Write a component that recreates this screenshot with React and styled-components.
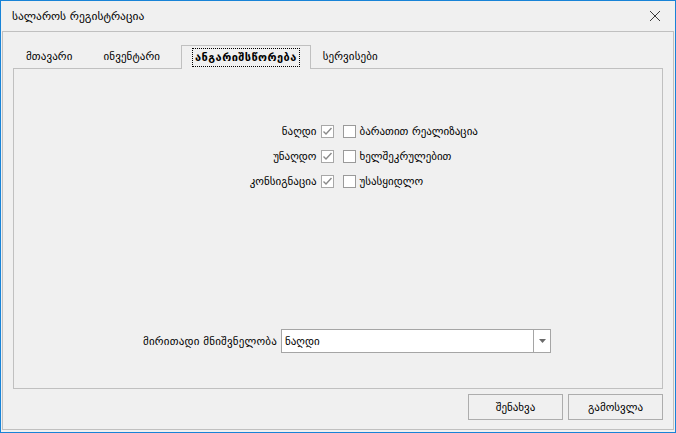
import React from 'react';
import styled, { createGlobalStyle } from 'styled-components';

const GlobalStyle = createGlobalStyle`
    html, body {
        margin: 0;
        padding: 0;
        background: #f0f0f0;
    }
    * {
        box-sizing: border-box;
    }
`;

const Window = styled.div`
    width: 676px;
    height: 433px;
    border: 1px solid #1883d7;
    background: #f0f0f0;
    display: flex;
    flex-direction: column;
    font-family: "DejaVu Sans", sans-serif;
    font-size: 11px;
    color: #000;
`;

const TitleBar = styled.div`
    height: 30px;
    display: flex;
    align-items: center;
    justify-content: space-between;
    padding: 0 14px 0 11px;
    font-size: 11.5px;
`;

const CloseButton = styled.div`
    width: 12px;
    height: 12px;
    display: flex;
    svg {
        display: block;
    }
`;

const Frame = styled.div`
    flex: 1;
    margin: 0 1px 2px 1px;
    border: 1px solid #c0c0c0;
    padding: 12px 10px 0 10px;
    display: flex;
    flex-direction: column;
`;

const TabStrip = styled.div`
    display: flex;
    height: 24px;
    align-items: stretch;
`;

const Tab = styled.div`
    display: flex;
    align-items: center;
    padding: 0 ${(p) => p.$pr}px 0 ${(p) => p.$pl}px;
    position: relative;
    font-weight: ${(p) => (p.$active ? 'bold' : 'normal')};
    letter-spacing: ${(p) => (p.$active ? '0.45px' : '0.1px')};
    border: 1px solid ${(p) => (p.$active ? '#c0c0c0' : 'transparent')};
    border-bottom: none;
    background: ${(p) => (p.$active ? '#f0f0f0' : 'transparent')};
    top: ${(p) => (p.$active ? '1px' : '0')};
    z-index: ${(p) => (p.$active ? 1 : 0)};
`;

const FocusText = styled.span`
    outline: 1px dotted #000;
    padding: 2px 2px;
`;

const TabPanel = styled.div`
    height: 321px;
    border: 1px solid #c0c0c0;
    display: flex;
    flex-direction: column;
`;

const ChoiceGrid = styled.div`
    margin-top: 56px;
    display: grid;
    grid-template-columns: 1fr auto auto 1fr;
    row-gap: 12px;
    align-items: center;
`;

const LeftLabel = styled.div`
    text-align: right;
    height: 13px;
    line-height: 13px;
    padding-right: 4px;
    white-space: nowrap;
`;

const RightLabel = styled.div`
    height: 13px;
    line-height: 13px;
    padding-left: 4px;
    white-space: nowrap;
`;

const Box = styled.div`
    width: 13px;
    height: 13px;
    border: 1px solid ${(p) => (p.$checked ? '#a8a8a8' : '#9a9a9a')};
    background: #fff;
    margin-left: ${(p) => (p.$second ? '9px' : '0')};
    display: flex;
    align-items: center;
    justify-content: center;
    svg {
        display: block;
    }
`;

const DefaultRow = styled.div`
    margin-top: auto;
    margin-bottom: 35px;
    display: grid;
    grid-template-columns: 263px 270px;
    column-gap: 4px;
    align-items: center;
`;

const DefaultLabel = styled.div`
    text-align: right;
    letter-spacing: 0.2px;
`;

const Combo = styled.div`
    height: 24px;
    border: 1px solid #a5a5a5;
    background: #fff;
    display: flex;
    align-items: stretch;
`;

const ComboText = styled.div`
    flex: 1;
    display: flex;
    align-items: center;
    padding-left: 3px;
`;

const ComboButton = styled.div`
    width: 17px;
    border-left: 1px solid #a5a5a5;
    display: flex;
    align-items: center;
    justify-content: center;
    background: #fff;
`;

const ButtonRow = styled.div`
    display: flex;
    justify-content: flex-end;
    gap: 5px;
    margin-top: 5px;
`;

const Button = styled.div`
    width: 95px;
    height: 26px;
    border: 1px solid #adadad;
    background: #f0f0f0;
    display: flex;
    align-items: center;
    justify-content: center;
`;

const Check = () => (
    <svg width="11" height="11" viewBox="0 0 11 11">
        <path d="M1.5 5.5 L4 8 L9.5 2" fill="none" stroke="#8a8a8a" strokeWidth="1.4" />
    </svg>
);

const App = () => {
    const choices = [
        { left: 'ნაღდი', right: 'ბარათით რეალიზაცია' },
        { left: 'უნაღდო', right: 'ხელშეკრულებით' },
        { left: 'კონსიგნაცია', right: 'უსასყიდლო' },
    ];

    return (
        <Window>
            <GlobalStyle />
            <TitleBar>
                <span>სალაროს რეგისტრაცია</span>
                <CloseButton>
                    <svg width="12" height="12" viewBox="0 0 12 12">
                        <path d="M1 1 L11 11 M11 1 L1 11" stroke="#3a3a3a" strokeWidth="1" />
                    </svg>
                </CloseButton>
            </TitleBar>
            <Frame>
                <TabStrip>
                    <Tab $pl={12} $pr={12}>მთავარი</Tab>
                    <Tab $pl={17} $pr={20}>ინვენტარი</Tab>
                    <Tab $pl={11} $pr={11} $active>
                        <FocusText>ანგარიშსწორება</FocusText>
                    </Tab>
                    <Tab $pl={11} $pr={11}>სერვისები</Tab>
                </TabStrip>
                <TabPanel>
                    <ChoiceGrid>
                        {choices.map((item) => (
                            <React.Fragment key={item.left}>
                                <LeftLabel>{item.left}</LeftLabel>
                                <Box $checked>
                                    <Check />
                                </Box>
                                <Box $second />
                                <RightLabel>{item.right}</RightLabel>
                            </React.Fragment>
                        ))}
                    </ChoiceGrid>
                    <DefaultRow>
                        <DefaultLabel>მირითადი მნიშვნელობა</DefaultLabel>
                        <Combo>
                            <ComboText>ნაღდი</ComboText>
                            <ComboButton>
                                <svg width="7" height="4" viewBox="0 0 7 4">
                                    <path d="M0 0 L7 0 L3.5 4 Z" fill="#6a6a6a" />
                                </svg>
                            </ComboButton>
                        </Combo>
                    </DefaultRow>
                </TabPanel>
                <ButtonRow>
                    <Button>შენახვა</Button>
                    <Button>გამოსვლა</Button>
                </ButtonRow>
            </Frame>
        </Window>
    );
};

export default App;
